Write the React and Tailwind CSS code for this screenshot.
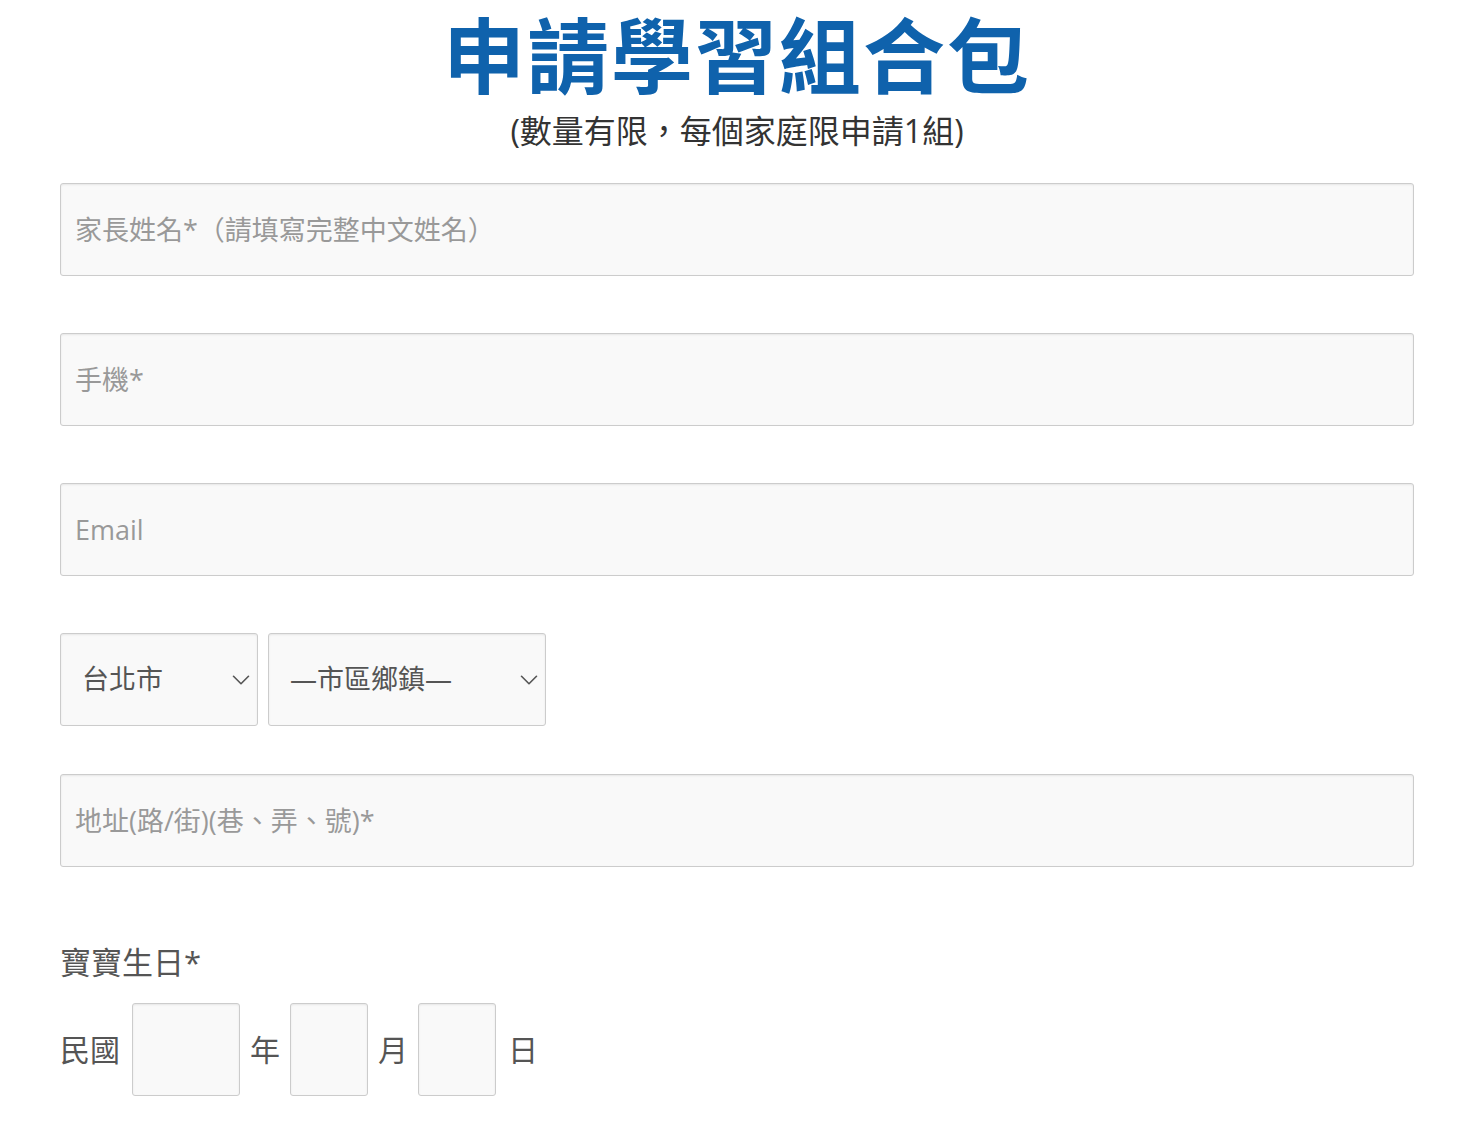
import React, { useState } from "react";
import { ChevronDown } from "lucide-react";

const font = { fontFamily: '"Open Sans", "Noto Sans CJK TC", sans-serif' };

const inputClass =
  "block w-full h-[93px] px-[14px] bg-[#f9f9f9] border border-[#cccccc] rounded-[3px] shadow-[inset_0_1px_2px_rgba(0,0,0,0.08)] text-[27px] text-[#555] placeholder:text-[#999] outline-none";

function SelectBox({ width, value, options, onChange }) {
  return (
    <div className={`relative ${width}`}>
      <select
        value={value}
        onChange={(e) => onChange(e.target.value)}
        className="appearance-none block w-full h-[93px] pl-[21px] pr-[40px] bg-[#f9f9f9] border border-[#cccccc] rounded-[3px] shadow-[inset_0_1px_2px_rgba(0,0,0,0.08)] text-[27px] text-[#555] outline-none"
      >
        {options.map((o) => (
          <option key={o}>{o}</option>
        ))}
      </select>
      <ChevronDown
        className="absolute right-[2px] top-1/2 -translate-y-1/2 pointer-events-none text-[#555]"
        size={30}
        strokeWidth={1.3}
      />
    </div>
  );
}

function DateBox({ width }) {
  return (
    <input
      type="text"
      className={`${width} h-[93px] bg-[#f9f9f9] border border-[#cccccc] rounded-[3px] shadow-[inset_0_1px_2px_rgba(0,0,0,0.08)] text-[27px] text-[#555] text-center outline-none`}
    />
  );
}

export default function App() {
  const [city, setCity] = useState("台北市");
  const [district, setDistrict] = useState("—市區鄉鎮—");

  return (
    <div className="min-h-screen bg-white pl-[60px] pr-[53px]" style={font}>
      <h1 className="mt-[10px] text-center text-[82px] leading-[90px] tracking-[2px] font-bold text-[#0f62ac]">
        申請學習組合包
      </h1>
      <p className="mt-[11px] text-center text-[32px] leading-[40px] text-[#333]">
        (數量有限，每個家庭限申請1組)
      </p>

      <form className="mt-[32px]" onSubmit={(e) => e.preventDefault()}>
        <input className={inputClass} placeholder="家長姓名*（請填寫完整中文姓名）" />
        <input className={`${inputClass} mt-[57px]`} placeholder="手機*" />
        <input className={`${inputClass} mt-[57px]`} placeholder="Email" />

        <div className="mt-[57px] flex gap-[10px]">
          <SelectBox
            width="w-[198px]"
            value={city}
            onChange={setCity}
            options={["台北市", "新北市", "桃園市", "台中市", "台南市", "高雄市"]}
          />
          <SelectBox
            width="w-[278px]"
            value={district}
            onChange={setDistrict}
            options={["—市區鄉鎮—", "中正區", "大同區", "中山區", "松山區"]}
          />
        </div>

        <input className={`${inputClass} mt-[48px]`} placeholder="地址(路/街)(巷、弄、號)*" />

        <div className="mt-[80px] text-[31px] leading-none text-[#555]">寶寶生日*</div>

        <div className="mt-[25px] flex items-center gap-[10px] text-[30px] text-[#555]">
          <span className="mr-[2px]">民國</span>
          <DateBox width="w-[108px]" />
          <span>年</span>
          <DateBox width="w-[78px]" />
          <span>月</span>
          <DateBox width="w-[78px]" />
          <span className="ml-[2px]">日</span>
        </div>
      </form>
    </div>
  );
}
